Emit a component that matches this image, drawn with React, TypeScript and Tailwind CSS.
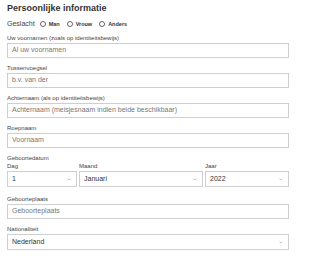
import type { ReactNode } from "react";

function Label({ children }: { children: ReactNode }) {
  return <label className="block text-[6px] leading-[6px] text-[#444] mb-[2px]">{children}</label>;
}

function TextInput({ placeholder }: { placeholder: string }) {
  return (
    <div className="h-[15px] border border-[#cfcfcf] flex items-center px-[4px] text-[7px] text-[#777] bg-white">
      {placeholder}
    </div>
  );
}

function Chevron() {
  return (
    <svg width="4" height="3" viewBox="0 0 4 3" className="shrink-0">
      <path d="M0.6 0.8 L2 2.1 L3.4 0.8" fill="none" stroke="#999" strokeWidth="0.6" />
    </svg>
  );
}

function Select({ value }: { value: string }) {
  return (
    <div className="h-[16px] border border-[#cfcfcf] flex items-center justify-between pl-[4px] pr-[5px] text-[7px] text-[#333] bg-white">
      <span>{value}</span>
      <Chevron />
    </div>
  );
}

function Field({ label, children }: { label: string; children: ReactNode }) {
  return (
    <div>
      <Label>{label}</Label>
      {children}
    </div>
  );
}

function Radio({ label }: { label: string }) {
  return (
    <span className="flex items-center gap-[3px]">
      <span className="w-[6px] h-[6px] rounded-full border border-[#666] bg-white" />
      <span className="text-[5.5px] font-semibold text-[#333]">{label}</span>
    </span>
  );
}

export default function App() {
  return (
    <div className="w-[300px] h-[259px] bg-white pl-[7px] pr-[11px] pt-[4px] font-['Liberation_Sans',Arial,sans-serif] overflow-hidden">
      <h2 className="text-[9px] leading-[9px] font-bold text-[#333]">Persoonlijke informatie</h2>

      <div className="mt-[7px] h-[8px] flex items-center">
        <span className="text-[7px] text-[#444] mr-[5px]">Geslacht</span>
        <div className="flex items-center gap-[7px]">
          <Radio label="Man" />
          <Radio label="Vrouw" />
          <Radio label="Anders" />
        </div>
      </div>

      <div className="mt-[7px] flex flex-col gap-[7px]">
        <Field label="Uw voornamen (zoals op identiteitsbewijs)">
          <TextInput placeholder="Al uw voornamen" />
        </Field>
        <Field label="Tussenvoegsel">
          <TextInput placeholder="b.v. van der" />
        </Field>
        <Field label="Achternaam (als op identiteitsbewijs)">
          <TextInput placeholder="Achternaam (meisjesnaam indien beide beschikbaar)" />
        </Field>
        <Field label="Roepnaam">
          <TextInput placeholder="Voornaam" />
        </Field>

        <div className="mb-[2px]">
          <div className="text-[6px] leading-[6px] text-[#444] mb-[2px]">Geboortedatum</div>
          <div className="grid grid-cols-[70px_124px_1fr] gap-[2px]">
            <Field label="Dag">
              <Select value="1" />
            </Field>
            <Field label="Maand">
              <Select value="Januari" />
            </Field>
            <Field label="Jaar">
              <Select value="2022" />
            </Field>
          </div>
        </div>

        <Field label="Geboorteplaats">
          <TextInput placeholder="Geboorteplaats" />
        </Field>
        <Field label="Nationaliteit">
          <Select value="Nederland" />
        </Field>
      </div>
    </div>
  );
}
